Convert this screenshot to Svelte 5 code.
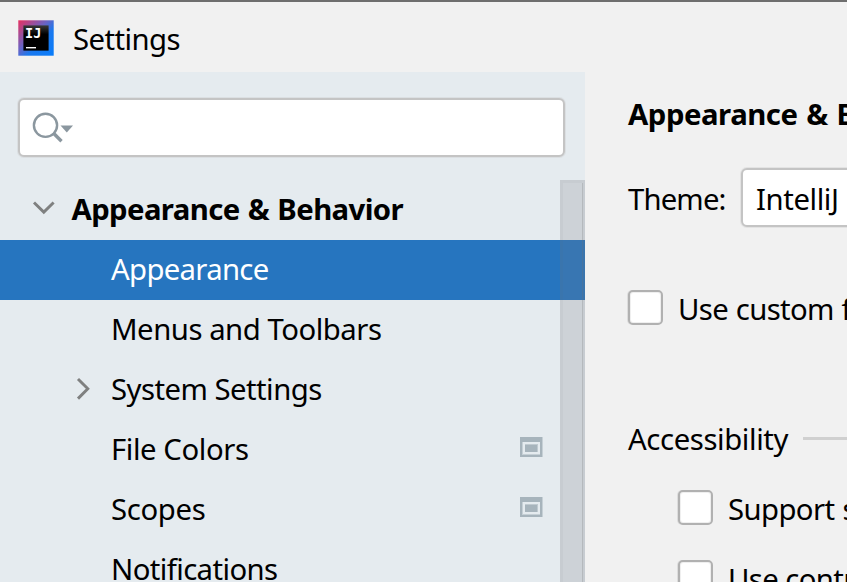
<script>
  const rows = [
    { label: 'Appearance', selected: true, spacing: -0.68 },
    { label: 'Menus and Toolbars', spacing: -0.47 },
    { label: 'System Settings', arrow: true, spacing: -0.53 },
    { label: 'File Colors', project: true, spacing: -0.42 },
    { label: 'Scopes', project: true, spacing: -0.35 },
    { label: 'Notifications', spacing: -0.6 }
  ];
</script>

<div class="window">
  <header>
    <svg class="logo" width="36" height="36" viewBox="0 0 36 36">
      <defs>
        <linearGradient id="edge" x1="0" y1="0" x2="1" y2="1">
          <stop offset="0" stop-color="#e8305f" />
          <stop offset=".42" stop-color="#6a63c4" />
          <stop offset=".62" stop-color="#1a78ee" />
          <stop offset="1" stop-color="#087cfa" />
        </linearGradient>
        <linearGradient id="core" x1="0" y1="0" x2="0" y2="1">
          <stop offset="0" stop-color="#3a3a3a" />
          <stop offset=".35" stop-color="#000" />
        </linearGradient>
      </defs>
      <rect x=".3" y=".3" width="35.4" height="35.4" fill="url(#edge)" />
      <rect x="5.4" y="5.4" width="25.2" height="25.2" fill="url(#core)" />
      <text x="7" y="18" font-family="'DejaVu Sans Mono', monospace" font-weight="700" font-size="13.5" fill="#fff">IJ</text>
      <rect x="8" y="27" width="10" height="1.4" fill="#fff" />
    </svg>
    <span class="title">Settings</span>
  </header>

  <div class="body">
    <aside>
      <div class="search">
        <svg width="44" height="34" viewBox="0 0 44 34">
          <circle cx="14.5" cy="14.3" r="11.6" fill="none" stroke="#8b979f" stroke-width="2.4" />
          <path d="M22.3 22L30.5 30.2" stroke="#8b979f" stroke-width="3.4" />
          <path d="M29.5 14.5H42L35.8 21.5Z" fill="#8b979f" />
        </svg>
      </div>

      <nav>
        <div class="row group">
          <svg width="24" height="16" viewBox="0 0 24 16">
            <path d="M2 1.5L11.8 11.1L21.6 1.5" fill="none" stroke="#7f8080" stroke-width="2.9" />
          </svg>
          <span class="group-name">Appearance &amp; Behavior</span>
        </div>
        {#each rows as row}
          <div class="row item" class:selected={row.selected}>
            <div class="gutter">
              {#if row.arrow}
                <svg width="16" height="24" viewBox="0 0 16 24">
                  <path d="M2 2L11.8 11.8L2 21.6" fill="none" stroke="#7f8080" stroke-width="2.9" />
                </svg>
              {/if}
            </div>
            <span style:letter-spacing="{row.spacing}px">{row.label}</span>
            {#if row.project}
              <svg class="project" width="23" height="20" viewBox="0 0 23 20" shape-rendering="crispEdges">
                <rect width="22" height="20" fill="#a7b4bc" />
                <rect x="22" width="1" height="20" fill="#c6d0d6" />
                <rect x="2" y="5" width="18" height="13" fill="#c6d0d6" />
                <rect x="3" y="5" width="17" height="12" fill="#e5ebef" />
                <rect x="5" y="7" width="13" height="8" fill="#c0cad0" />
                <rect x="5" y="8" width="12" height="7" fill="#a7b4bc" />
              </svg>
            {/if}
          </div>
        {/each}
        <div class="scrollbar"></div>
      </nav>
    </aside>

    <main>
      <h1>Appearance &amp; Behavior</h1>
      <div class="theme">
        <span class="theme-label">Theme:</span>
        <div class="combo"><span>IntelliJ</span></div>
      </div>
      <div class="check custom">
        <i></i><span class="custom-label">Use custom font:</span>
      </div>
      <div class="section"><span>Accessibility</span><hr /></div>
      <div class="check nested">
        <i></i><span class="support">Support screen readers</span>
      </div>
      <div class="check nested">
        <i></i><span class="contrast">Use contrast scrollbars</span>
      </div>
    </main>
  </div>
</div>

<style>
  :global(body) { overflow: hidden; }
  .window {
    box-sizing: border-box;
    width: 847px;
    height: 582px;
    overflow: hidden;
    display: flex;
    flex-direction: column;
    border-top: 2px solid #6e6e6e;
    background: #f1f1f1;
    color: #000;
    font: 29.3px/60px "Noto Sans", "Open Sans", sans-serif;
    white-space: nowrap;
  }
  header { flex: none; height: 70px; display: flex; }
  .logo { margin: 18px 19px 0 18px; }
  .title { margin-top: 7px; letter-spacing: -0.57px; }
  .body { flex: 1; min-height: 0; display: flex; }
  aside {
    width: 585px;
    flex: none;
    display: flex;
    flex-direction: column;
    background: #e5ebef;
    overflow: hidden;
  }
  .search {
    box-sizing: border-box;
    flex: none;
    width: 547px;
    height: 59px;
    margin: 26px 0 23px 18px;
    padding: 11px;
    border: 2px solid #c4c4c4;
    border-radius: 6px;
    background: #fff;
    box-shadow: 0 0 0 1px rgba(196, 196, 196, .3);
    line-height: 0;
  }
  nav { position: relative; flex: 1; }
  .row { height: 60px; display: flex; }
  .row span { margin-top: -1px; }
  .group { font-weight: 700; letter-spacing: -0.6px; word-spacing: 1.2px; }
  .group svg { margin: 21px 15.5px 0 32px; }
  .gutter { width: 111px; flex: none; }
  .gutter svg { display: block; margin: 17px 0 0 76px; }
  .selected { background: #2675bf; color: #fff; }
  .project { margin: 17px 42px 0 auto; }
  .scrollbar {
    position: absolute;
    box-sizing: border-box;
    top: 0;
    right: 0;
    bottom: 0;
    width: 25px;
    border: solid rgba(100, 100, 100, .05);
    border-width: 3px 2px 0 3px;
    background: rgba(124, 122, 134, .22);
    box-shadow: inset -1px 0 rgba(110, 110, 110, .25);
  }
  main { flex: 1; min-width: 0; overflow: hidden; padding-left: 43px; }
  h1 { margin: 12px 0 0; font: inherit; font-weight: 700; height: 60px; letter-spacing: -0.45px; word-spacing: 1.5px; }
  .theme { display: flex; margin-top: 24px; height: 60px; }
  .theme-label { margin-top: 1px; width: 113px; flex: none; letter-spacing: -0.85px; }
  .combo {
    box-sizing: border-box;
    flex: none;
    width: 240px;
    height: 59px;
    padding-left: 13px;
    border: 2px solid #c4c4c4;
    border-radius: 6px;
    background: #fff;
    box-shadow: 0 0 0 1px rgba(196, 196, 196, .3);
  }
  .combo span { display: block; margin-top: -1px; letter-spacing: -0.4px; }
  .check { display: flex; height: 70px; }
  .check i {
    box-sizing: border-box;
    flex: none;
    width: 35px;
    height: 35px;
    margin: 12px 15px 0 0;
    border: 2px solid #b1b1b1;
    border-radius: 5px;
    background: #fff;
    box-shadow: -1px 0 rgba(177, 177, 177, .3), inset 0 0 0 1px rgba(177, 177, 177, .2);
  }
  .check span { margin-top: 1px; letter-spacing: -0.6px; }
  .check .custom-label { letter-spacing: -0.65px; word-spacing: 0.8px; }
  .check .support { word-spacing: 1px; }
  .custom { margin-top: 50px; height: 130px; }
  .section { display: flex; height: 70px; }
  .section span { margin-top: 1px; letter-spacing: -0.4px; }
  .section hr { flex: 1; height: 3px; margin: 29px 0 0 15px; border: 0; background: #d0d0d0; }
  .nested { padding-left: 50px; }
</style>
